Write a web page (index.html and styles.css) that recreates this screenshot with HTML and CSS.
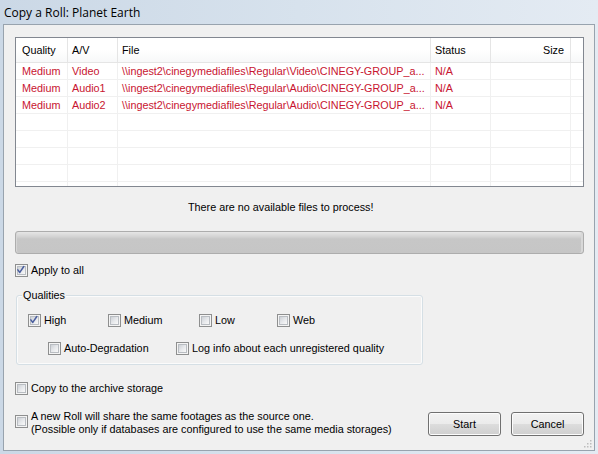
FILE: index.html
```html
<!DOCTYPE html>
<html>
<head>
<meta charset="utf-8">
<title>Copy a Roll: Planet Earth</title>
<link rel="stylesheet" href="styles.css">
</head>
<body>
<div class="window">
  <div class="titlebar">Copy a Roll: Planet Earth</div>
  <div class="client">
    <div class="list">
      <div class="grid lhead">
        <div class="hc c1">Quality</div>
        <div class="hc">A/V</div>
        <div class="hc">File</div>
        <div class="hc">Status</div>
        <div class="hc c5">Size</div>
        <div class="hc c6"></div>
      </div>
      <div class="grid lrow red">
        <div class="cell c1">Medium</div>
        <div class="cell">Video</div>
        <div class="cell">\\ingest2\cinegymediafiles\Regular\Video\CINEGY-GROUP_a...</div>
        <div class="cell">N/A</div>
        <div class="cell"></div>
        <div class="cell c6"></div>
      </div>
      <div class="grid lrow red">
        <div class="cell c1">Medium</div>
        <div class="cell">Audio1</div>
        <div class="cell">\\ingest2\cinegymediafiles\Regular\Audio\CINEGY-GROUP_a...</div>
        <div class="cell">N/A</div>
        <div class="cell"></div>
        <div class="cell c6"></div>
      </div>
      <div class="grid lrow red">
        <div class="cell c1">Medium</div>
        <div class="cell">Audio2</div>
        <div class="cell">\\ingest2\cinegymediafiles\Regular\Audio\CINEGY-GROUP_a...</div>
        <div class="cell">N/A</div>
        <div class="cell"></div>
        <div class="cell c6"></div>
      </div>
      <div class="grid lrow"><div class="cell c1"></div><div class="cell"></div><div class="cell"></div><div class="cell"></div><div class="cell"></div><div class="cell c6"></div></div>
      <div class="grid lrow"><div class="cell c1"></div><div class="cell"></div><div class="cell"></div><div class="cell"></div><div class="cell"></div><div class="cell c6"></div></div>
      <div class="grid lrow"><div class="cell c1"></div><div class="cell"></div><div class="cell"></div><div class="cell"></div><div class="cell"></div><div class="cell c6"></div></div>
      <div class="grid lrow"><div class="cell c1"></div><div class="cell"></div><div class="cell"></div><div class="cell"></div><div class="cell"></div><div class="cell c6"></div></div>
      <div class="grid lrow last"><div class="cell c1"></div><div class="cell"></div><div class="cell"></div><div class="cell"></div><div class="cell"></div><div class="cell c6"></div></div>
    </div>

    <div class="message">There are no available files to process!</div>

    <div class="progress"></div>

    <div class="chk apply">
      <span class="cb"><svg viewBox="0 0 13 13" width="11" height="11"><path d="M2.2 5.8 L4.5 8.8 L9.2 1.8" fill="none" stroke="#4b5f9e" stroke-width="1.8" stroke-linecap="round" stroke-linejoin="round"/></svg></span>
      <span>Apply to all</span>
    </div>

    <div class="group">
      <div class="glabel">Qualities</div>
      <div class="grow r1">
        <div class="chk w80">
          <span class="cb"><svg viewBox="0 0 13 13" width="11" height="11"><path d="M2.2 5.8 L4.5 8.8 L9.2 1.8" fill="none" stroke="#4b5f9e" stroke-width="1.8" stroke-linecap="round" stroke-linejoin="round"/></svg></span>
          <span>High</span>
        </div>
        <div class="chk w91"><span class="cb"></span><span>Medium</span></div>
        <div class="chk w78"><span class="cb"></span><span>Low</span></div>
        <div class="chk"><span class="cb"></span><span>Web</span></div>
      </div>
      <div class="grow r2">
        <div class="chk w128"><span class="cb"></span><span>Auto-Degradation</span></div>
        <div class="chk"><span class="cb"></span><span>Log info about each unregistered quality</span></div>
      </div>
    </div>

    <div class="chk copy"><span class="cb"></span><span>Copy to the archive storage</span></div>

    <div class="bottom">
      <div class="share">
        <span class="cb"></span>
        <div class="sharetext">A new Roll will share the same footages as the source one.<br>(Possible only if databases are configured to use the same media storages)</div>
      </div>
      <div class="buttons">
        <div class="btn">Start</div>
        <div class="btn">Cancel</div>
      </div>
    </div>

    <svg class="grip" width="10" height="10" viewBox="0 0 10 10">
      <rect x="7" y="1" width="1.5" height="1.5" fill="#bdbdbd"/>
      <rect x="4" y="4" width="1.5" height="1.5" fill="#bdbdbd"/>
      <rect x="7" y="4" width="1.5" height="1.5" fill="#bdbdbd"/>
      <rect x="1" y="7" width="1.5" height="1.5" fill="#bdbdbd"/>
      <rect x="4" y="7" width="1.5" height="1.5" fill="#bdbdbd"/>
      <rect x="7" y="7" width="1.5" height="1.5" fill="#bdbdbd"/>
    </svg>
  </div>
</div>
</body>
</html>
```

FILE: styles.css
```css
* { box-sizing: border-box; }
html, body { margin: 0; padding: 0; }
body {
  width: 598px;
  height: 454px;
  overflow: hidden;
  font-family: "Liberation Sans", Arial, sans-serif;
  font-size: 10.8px;
  color: #000;
  background: #d9e3ee;
}
.window {
  width: 598px;
  height: 454px;
  display: flex;
  flex-direction: column;
  background: linear-gradient(to right, #cbd8e6 0%, #d7e2ed 50%, #e4ebf3 100%);
}
.titlebar {
  height: 24px;
  padding-left: 4px;
  font-family: "Open Sans", "Noto Sans", sans-serif;
  font-size: 12px;
  line-height: 25px;
  color: #000;
  white-space: nowrap;
}
.client {
  position: relative;
  margin: 0 3px 3px 3px;
  height: 427px;
  border: 1px solid #98a3ae;
  background: #f0f0f0;
  display: flex;
  flex-direction: column;
}

/* list view */
.list {
  margin: 12px 0 0 11px;
  width: 569px;
  height: 150px;
  border: 1px solid #828790;
  background: #fff;
  overflow: hidden;
  flex: none;
}
.grid {
  display: grid;
  grid-template-columns: 52px 50px 313px 60px 80px 1fr;
}
.lhead {
  height: 25px;
  border-bottom: 1px solid #e5e5e5;
  background: linear-gradient(#ffffff 0%, #ffffff 50%, #f7f8f9 100%);
}
.hc {
  border-right: 1px solid #e5e5e5;
  line-height: 25px;
  padding-left: 4px;
  white-space: nowrap;
}
.hc.c1 { padding-left: 6px; }
.hc.c5 { text-align: right; padding-right: 6px; }
.hc.c6, .cell.c6 { border-right: none; }
.lrow {
  height: 17px;
  border-bottom: 1px solid #f0f0f0;
}
.lrow.last { border-bottom: none; }
.cell {
  border-right: 1px solid #f0f0f0;
  line-height: 17px;
  padding-left: 4px;
  white-space: nowrap;
  overflow: hidden;
}
.cell.c1 { padding-left: 6px; }
.red { color: #c81430; }

/* message + progress */
.message {
  margin-top: 13px;
  padding-left: 184px;
  line-height: 14px;
  white-space: nowrap;
}
.progress {
  margin: 17px 0 0 11px;
  width: 569px;
  height: 23px;
  border: 1px solid #adadad;
  border-radius: 3px;
  background: linear-gradient(#e6e6e6 0px, #dedede 2px, #d2d2d2 5px, #c7c7c7 7px, #c6c6c6 100%);
  box-shadow: inset -2px 0 0 #d8d8d8, inset 1px 0 0 #d6d6d6;
  flex: none;
}

/* checkboxes */
.chk {
  display: flex;
  align-items: center;
  gap: 3px;
  height: 13px;
  line-height: 13px;
  white-space: nowrap;
  flex: none;
}
.cb {
  position: relative;
  width: 13px;
  height: 13px;
  flex: none;
  border: 1px solid #8e8f8f;
  background: #f4f4f4;
  display: flex;
  align-items: center;
  justify-content: center;
}
.cb::before {
  content: "";
  position: absolute;
  left: 1px; top: 1px; right: 1px; bottom: 1px;
  border: 1px solid #b9bdc2;
  background: linear-gradient(135deg, #cdd1d6 0%, #e6e8eb 50%, #f9f9f9 100%);
}
.cb svg { position: relative; }
.apply { margin: 10px 0 0 11px; }
.copy { margin: 17px 0 0 11px; }

/* group box */
.group {
  margin: 18px 0 0 12px;
  width: 407px;
  border: 1px solid #d5dfe5;
  border-radius: 3px;
  box-shadow: inset 0 0 0 1px #fbfbfb;
  padding: 0 0 9px 11px;
  display: flex;
  flex-direction: column;
  flex: none;
}
.glabel {
  align-self: flex-start;
  margin: -7px 0 0 -6px;
  padding: 0 1px;
  line-height: 13px;
  background: #f0f0f0;
}
.grow { display: flex; }
.r1 { margin-top: 12px; }
.r2 { margin: 15px 0 0 20px; }
.w80 { width: 80px; }
.w91 { width: 91px; }
.w78 { width: 78px; }
.w128 { width: 128px; }

/* bottom */
.bottom {
  margin: 17px 0 0 11px;
  padding-right: 10px;
  display: flex;
  align-items: flex-start;
}
.share {
  display: flex;
  align-items: flex-start;
  gap: 3px;
  margin-top: -2px;
}
.share .cb { margin-top: 5px; }
.sharetext {
  line-height: 13px;
  white-space: nowrap;
}
.buttons {
  margin-left: auto;
  display: flex;
  gap: 10px;
}
.btn {
  width: 73px;
  height: 24px;
  border: 1px solid #707070;
  border-radius: 3px;
  background: linear-gradient(#f2f2f2 0%, #ebebeb 50%, #dddddd 50%, #cfcfcf 100%);
  box-shadow: inset 0 0 0 1px #fcfcfc;
  text-align: center;
  line-height: 22px;
}
.grip {
  position: absolute;
  right: 1px;
  bottom: 1px;
}
```
